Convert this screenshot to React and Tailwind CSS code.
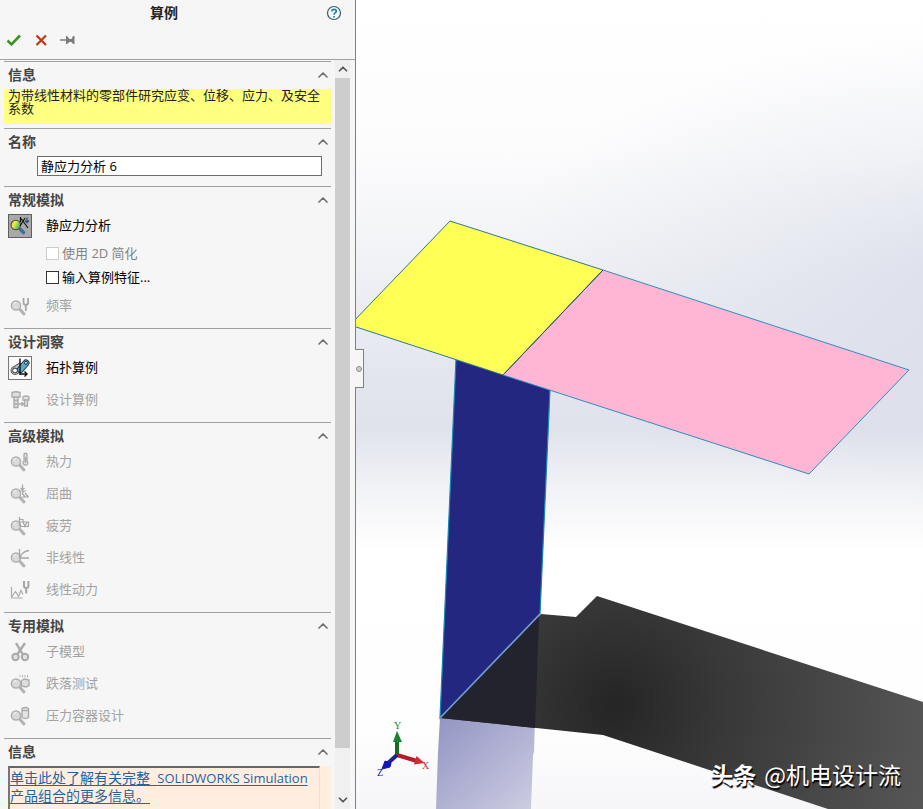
import { ChevronDown, ChevronUp } from 'lucide-react';

function Lens() {
    return (
        <g>
            <path d="M12 15.500l4 4.500" stroke="#b2b2b2" strokeWidth="3" strokeLinecap="round" />
            <circle cx="8" cy="11.500" r="4.600" fill="#dadada" stroke="#b0b0b0" strokeWidth="1.500" />
            <path d="M5.500 10.500a3 3 0 0 1 2.500-2" stroke="#f4f4f4" strokeWidth="1" />
        </g>
    );
}

const drawings = {
    static: (
        <>
            <defs>
                <linearGradient id="rainbow" x1="0" y1="0" x2="1" y2="0.6">
                    <stop offset="0" stopColor="#ee8a3c" />
                    <stop offset="0.4" stopColor="#f3ee4a" />
                    <stop offset="0.75" stopColor="#7fd04a" />
                    <stop offset="1" stopColor="#3fb08a" />
                </linearGradient>
            </defs>
            <path d="M12.500 15.500l3 3" stroke="#3f6d9a" strokeWidth="3.400" strokeLinecap="round" />
            <circle cx="7.800" cy="11" r="4.800" fill="url(#rainbow)" stroke="#4b4b4b" strokeWidth="1.100" />
            <path d="M12.500 3v5M13 4.500l7 9.500M17 4l-5 8" stroke="#111" strokeWidth="1.200" />
            <path d="M19 3.500v5M17 6.500l2 2.200 2-2.200" stroke="#24506f" strokeWidth="1.200" />
        </>
    ),
    frequency: (
        <>
            <Lens />
            <path d="M15.500 4v4q0 3 2.300 3t2.300-3V4M17.800 11v6" stroke="#a6a6a6" strokeWidth="1.800" />
        </>
    ),
    topology: (
        <>
            <path d="M7 14.500l5-3" stroke="#4c5656" strokeWidth="9" strokeLinecap="round" />
            <path d="M7 14.500l5-3" stroke="#bfc3c3" strokeWidth="7" strokeLinecap="round" />
            <path d="M12.500 13.500l5.500-6.500" stroke="#16323f" strokeWidth="7" strokeLinecap="round" />
            <path d="M12.500 13.500l5.500-6.500" stroke="#62a6c6" strokeWidth="5.200" strokeLinecap="round" />
            <circle cx="7" cy="14.500" r="2.400" fill="#ffffff" stroke="#333333" />
            <circle cx="18" cy="6.800" r="1.500" fill="#c9e2ee" stroke="#16323f" />
            <path d="M12 2.500V19M12 18h7M16.500 15.500l2.500 2.500-2.500 2.500" stroke="#111111" strokeWidth="1.400" />
        </>
    ),
    design: (
        <>
            <path d="M4 4.500q4-1.500 8 0V9H4zM6 9v10.500h4V9M6 12.500h4M6 16h4" fill="#dedede" stroke="#ababab" strokeWidth="1.400" />
            <path d="M15 8.500q3-1 6 0V12h-6zM16.500 12v6h3v-6M10.500 16h5M13.500 14l2 2-2 2" fill="#dedede" stroke="#ababab" strokeWidth="1.300" />
        </>
    ),
    thermal: (
        <>
            <Lens />
            <path d="M16 4q1.500-1.500 3 0v7q2 2.500-.5 4-3 .5-3.500-2 0-1 1-2zM17.500 7v6" fill="#e2e2e2" stroke="#ababab" strokeWidth="1.300" />
        </>
    ),
    buckling: (
        <>
            <Lens />
            <path d="M14.500 2.500v5M12.500 6l2 2 2-2M11 9h7M15.500 9l-1 3 3 3M17 11l3 3.500M14 15h7" stroke="#a6a6a6" strokeWidth="1.200" />
        </>
    ),
    fatigue: (
        <>
            <Lens />
            <path d="M11.500 3v9M11.500 5.500h3.500v2.500M11.500 8h9.500M11.500 12.500h9.500M20.500 8v4.500M15 8l2 4.500 2-4.500" stroke="#a6a6a6" strokeWidth="1.200" />
        </>
    ),
    nonlinear: (
        <>
            <Lens />
            <path d="M11.500 3v9h9.500M12 11.500q2-6 9-7" stroke="#a6a6a6" strokeWidth="1.300" />
        </>
    ),
    dynamic: (
        <>
            <path d="M3.500 9v11h11M4 18.500l3.500-5 3 5 2.500-6 2 4" stroke="#ababab" strokeWidth="1.200" />
            <path d="M16 3v5q0 2 2.200 2T20.400 8V3M18.200 10v5.500" stroke="#a6a6a6" strokeWidth="2" />
        </>
    ),
    submodel: (
        <>
            <path d="M8 3l6.500 11M17 3L9.500 14" stroke="#a9a9a9" strokeWidth="2.400" />
            <circle cx="7.500" cy="17" r="3.200" fill="#e2e2e2" stroke="#a9a9a9" strokeWidth="2" />
            <circle cx="17" cy="17" r="3.200" fill="#e2e2e2" stroke="#a9a9a9" strokeWidth="2" />
        </>
    ),
    drop: (
        <>
            <Lens />
            <path d="M12 3v2M14.500 3v2.500M17 3v2.500M19.500 3v2.500" stroke="#b5b5b5" />
            <path d="M13.500 8.500l3-1.500 4.500 1v5.500l-3 1.500-4.500-1z" fill="#dedede" stroke="#ababab" strokeWidth="1.300" />
        </>
    ),
    vessel: (
        <>
            <Lens />
            <path d="M14 4.500q3.500-2 6.500 0v9q-3 2-6.500 0zM14 6.500h6.500" fill="#e4e4e4" stroke="#ababab" strokeWidth="1.400" />
        </>
    ),
};

const frames = {
    pressed: 'border border-[#5f5f5f] bg-[#a9a9a9]',
    outlined: 'border border-[#777777] bg-[#fbfbfb]',
    plain: '',
};

function StudyRow({ icon, label, frame = 'plain', disabled = true }) {
    return (
        <button
            type="button"
            disabled={disabled}
            className={`flex h-6 items-center text-left ${disabled ? 'text-[#a2a2a2]' : 'text-black'}`}
        >
            <span className={`mr-3.5 flex size-6 items-center justify-center ${frames[frame]}`}>
                <svg viewBox="0 0 24 24" fill="none" className="size-6 shrink-0">
                    {drawings[icon]}
                </svg>
            </span>
            <span className="pb-0.5">{label}</span>
        </button>
    );
}

function CheckRow({ id, label, disabled = false }) {
    return (
        <div className="ml-[38px] flex h-6 items-center gap-[3px] pb-0.5">
            <input
                id={id}
                type="checkbox"
                disabled={disabled}
                className="size-[13px] appearance-none border border-[#333333] bg-white checked:bg-[#333333] disabled:border-[#cccccc]"
            />
            <label htmlFor={id} className={disabled ? 'text-[#838383]' : 'text-black'}>
                {label}
            </label>
        </div>
    );
}

function Section({ title, children }) {
    return (
        <section className="border-t border-[#a0a0a0]">
            <h2>
                <button
                    type="button"
                    className="flex h-[27px] w-full items-center justify-between pb-0.5 pl-1 text-sm font-bold text-[#444444]"
                >
                    {title}
                    <ChevronUp className="size-4 text-[#6f6f6f]" strokeWidth={2.5} />
                </button>
            </h2>
            {children}
        </section>
    );
}

const advancedStudies = [
    { icon: 'thermal', label: '热力' },
    { icon: 'buckling', label: '屈曲' },
    { icon: 'fatigue', label: '疲劳' },
    { icon: 'nonlinear', label: '非线性' },
    { icon: 'dynamic', label: '线性动力' },
];

const specialStudies = [
    { icon: 'submodel', label: '子模型' },
    { icon: 'drop', label: '跌落测试' },
    { icon: 'vessel', label: '压力容器设计' },
];

function StudyPanel() {
    return (
        <aside className="relative flex w-[356px] shrink-0 flex-col border-r border-[#808080] bg-[#f6f6f6]">
            <header className="shrink-0 border-b border-[#a0a0a0]">
                <div className="flex h-[26px] items-center pr-[13px]">
                    <h1 className="flex-1 pl-0.5 text-center text-sm font-bold text-[#222222]">算例</h1>
                    <button type="button" aria-label="帮助">
                        <svg viewBox="0 0 16 16" fill="none" className="size-4">
                            <circle cx="8" cy="8" r="6.500" fill="#f4fafc" stroke="#3f5964" strokeWidth="1.200" />
                            <path d="M5.800 6.300q.2-2 2.300-2t2.200 1.800q0 1.100-1.100 1.800T8 9.700M8 11v1.400" stroke="#2880a2" strokeWidth="1.700" />
                        </svg>
                    </button>
                </div>
                <div className="flex h-[33px] gap-[11px] px-1.5 pt-1.5">
                    <button type="button" aria-label="确定" className="size-4">
                        <svg viewBox="0 0 16 16" fill="none" className="size-4">
                            <path d="M1.500 8.500l4 4L14 3.500" stroke="#3e9326" strokeWidth="2.600" />
                        </svg>
                    </button>
                    <button type="button" aria-label="取消" className="size-4">
                        <svg viewBox="0 0 16 16" fill="none" className="size-4">
                            <path d="M3.500 3.500l9.500 9.500M13 3.500L3.500 13" stroke="#c23616" strokeWidth="2.200" />
                        </svg>
                    </button>
                    <button type="button" aria-label="保持可见" className="size-4">
                        <svg viewBox="0 0 16 16" className="size-4" fill="#7d7d7d">
                            <path d="M0 7.300h6V4h1l2.500 3h2L13 4h1.500v8H13l-1.500-2h-2L7 12H6V8.700H0z" />
                        </svg>
                    </button>
                </div>
            </header>

            <div className="flex min-h-0 flex-1">
                <div className="min-w-0 flex-1 overflow-hidden pt-px pl-1 text-[13px] leading-4">
                    <Section title="信息">
                        <p className="mb-1 h-[35px] bg-[#ffff80] pl-1 leading-[13px] text-[#222222]">
                            为带线性材料的零部件研究应变、位移、应力、及安全系数
                        </p>
                    </Section>

                    <Section title="名称">
                        <div className="pr-[9px] pb-2.5 pl-[33px]">
                            <input
                                type="text"
                                aria-label="名称"
                                defaultValue="静应力分析 6"
                                className="block h-5 w-full border border-[#6e6e6e] bg-white px-[3px] pb-0.5 text-black"
                            />
                        </div>
                    </Section>

                    <Section title="常规模拟">
                        <div className="flex flex-col gap-1 pb-2.5 pl-1">
                            <StudyRow icon="static" label="静应力分析" frame="pressed" disabled={false} />
                            <div>
                                <CheckRow id="simplify" label="使用 2D 简化" disabled />
                                <CheckRow id="features" label="输入算例特征..." />
                            </div>
                            <StudyRow icon="frequency" label="频率" />
                        </div>
                    </Section>

                    <Section title="设计洞察">
                        <div className="flex flex-col gap-2 pb-2.5 pl-1">
                            <StudyRow icon="topology" label="拓扑算例" frame="outlined" disabled={false} />
                            <StudyRow icon="design" label="设计算例" />
                        </div>
                    </Section>

                    <Section title="高级模拟">
                        <div className="flex flex-col gap-2 pb-2.5 pl-1">
                            {advancedStudies.map((study) => (
                                <StudyRow key={study.icon} icon={study.icon} label={study.label} />
                            ))}
                        </div>
                    </Section>

                    <Section title="专用模拟">
                        <div className="flex flex-col gap-2 pb-2.5 pl-1">
                            {specialStudies.map((study) => (
                                <StudyRow key={study.icon} icon={study.icon} label={study.label} />
                            ))}
                        </div>
                    </Section>

                    <Section title="信息">
                        <div className="ml-1 bg-[#ffeee0] pr-[11px]">
                            <div className="h-20 border-t-2 border-r border-l-2 border-t-[#666666] border-r-[#e8e0d8] border-l-[#777777] pt-px text-sm leading-[17px]">
                                <a href="#simulation" className="text-[#2464a4] underline underline-offset-2">
                                    单击此处了解有关完整&nbsp; <span className="text-[13px]">SOLIDWORKS Simulation</span>
                                    {' 产品组合的更多信息。'}
                                </a>
                            </div>
                        </div>
                    </Section>
                </div>

                {/* Scrollbar */}
                <div className="mr-[5px] ml-1 flex w-[15px] shrink-0 flex-col items-center bg-[#f0f0f0]">
                    <button type="button" aria-label="向上滚动" className="flex h-[18px] items-center">
                        <ChevronUp className="size-3.5 text-[#555555]" strokeWidth={3} />
                    </button>
                    <div className="w-full flex-[670] bg-[#cdcdcd]" />
                    <div className="flex-[43]" />
                    <button type="button" aria-label="向下滚动" className="flex h-[18px] items-center">
                        <ChevronDown className="size-3.5 text-[#555555]" strokeWidth={3} />
                    </button>
                </div>
            </div>

            {/* Collapse handle, sits over the viewport */}
            <button
                type="button"
                aria-label="折叠面板"
                className="absolute top-[349px] -right-[9px] z-10 flex h-[39px] w-[9px] items-center justify-center border border-l-0 border-[#808080] bg-[#f6f6f6]"
            >
                <span className="size-1.5 rounded-full border border-[#909090] bg-[#cccccc]" />
            </button>
        </aside>
    );
}

function Model() {
    return (
        <svg viewBox="356 0 567 809" preserveAspectRatio="xMinYMin slice" className="size-full" fill="none">
            <defs>
                <linearGradient id="sky" x1="0" y1="0" x2="0" y2="1">
                    <stop offset="0" stopColor="#ffffff" />
                    <stop offset="0.18" stopColor="#fcfcfd" />
                    <stop offset="0.3" stopColor="#f3f4f7" />
                    <stop offset="0.46" stopColor="#e4e6ef" />
                    <stop offset="0.53" stopColor="#e0e3ec" />
                    <stop offset="0.6" stopColor="#f1f2f6" />
                    <stop offset="0.68" stopColor="#ffffff" />
                    <stop offset="0.9" stopColor="#fefefe" />
                    <stop offset="1" stopColor="#f6f6f9" />
                </linearGradient>
                <radialGradient
                    id="haze"
                    gradientUnits="userSpaceOnUse"
                    cx="0"
                    cy="0"
                    r="1"
                    gradientTransform="translate(980 270) scale(480 240)"
                >
                    <stop offset="0" stopColor="#c9cfe0" stopOpacity="0.5" />
                    <stop offset="0.5" stopColor="#c9cfe0" stopOpacity="0.22" />
                    <stop offset="1" stopColor="#c9cfe0" stopOpacity="0" />
                </radialGradient>
                <radialGradient id="shade" gradientUnits="userSpaceOnUse" cx="615" cy="705" r="330">
                    <stop offset="0" stopColor="#252525" />
                    <stop offset="0.35" stopColor="#393939" />
                    <stop offset="1" stopColor="#575757" />
                </radialGradient>
                <linearGradient id="mirror" x1="0" y1="0" x2="1" y2="1">
                    <stop offset="0" stopColor="#9294c3" />
                    <stop offset="1" stopColor="#cdcde2" />
                </linearGradient>
            </defs>

            <rect x="356" width="567" height="809" fill="url(#sky)" />
            <rect x="356" width="567" height="809" fill="url(#haze)" />
            <path d="M440 718H535L534 752 533 755 531 809H436L438 752z" fill="url(#mirror)" />
            <path d="M440 718L541 614 576 617 597 596 923 702V809H828L603 735z" fill="url(#shade)" />
            <path d="M440 718L539 616 535 728z" fill="#22232c" />

            <path d="M456 359L550 389 540 614 440 718z" fill="#23277f" stroke="#1686b4" strokeWidth="1.200" />
            <path d="M540 614L440 718" stroke="#7798cf" strokeWidth="1.600" />
            <path d="M603 270L909 370 809 474 503 375z" fill="#ffb6d5" stroke="#2f8dbd" />
            <path d="M450 221L603 270 503 375 350 325z" fill="#ffff55" stroke="#2b7899" />
            <path d="M603 270L503 375" stroke="#304f70" />

            {/* Axis triad */}
            <g strokeWidth="4">
                <path d="M397 755V739" stroke="#176d25" />
                <path d="M393 742l4-11 5 11z" fill="#168330" />
                <path d="M397 755l20 6" stroke="#b51c25" />
                <path d="M414 764.500l2.500-8.500 8 7z" fill="#d22a32" />
                <path d="M397 755l-10 9" stroke="#20208c" />
                <path d="M382 769l3-8 6 2-1 4z" fill="#1515bb" stroke="#1515bb" strokeWidth="1" />
            </g>
            <g fontFamily="'Liberation Serif', serif" fontSize="10">
                <text x="394" y="729" fill="#168330">Y</text>
                <text x="422" y="769" fill="#c42730">X</text>
                <text x="377" y="776" fill="#1515a0">Z</text>
            </g>
        </svg>
    );
}

export default function App() {
    return (
        <div className="flex h-screen overflow-hidden bg-white font-['Open_Sans','Noto_Sans_CJK_SC',sans-serif]">
            <StudyPanel />
            <main className="relative min-w-0 flex-1">
                <Model />
                <p className="absolute right-[22px] bottom-[19px] flex items-center gap-2 font-['Noto_Sans_CJK_SC',sans-serif] text-[23px] leading-8 text-white [text-shadow:1px_2px_1px_#000000]">
                    <span className="font-bold">头条</span>
                    <span>@机电设计流</span>
                </p>
            </main>
        </div>
    );
}
